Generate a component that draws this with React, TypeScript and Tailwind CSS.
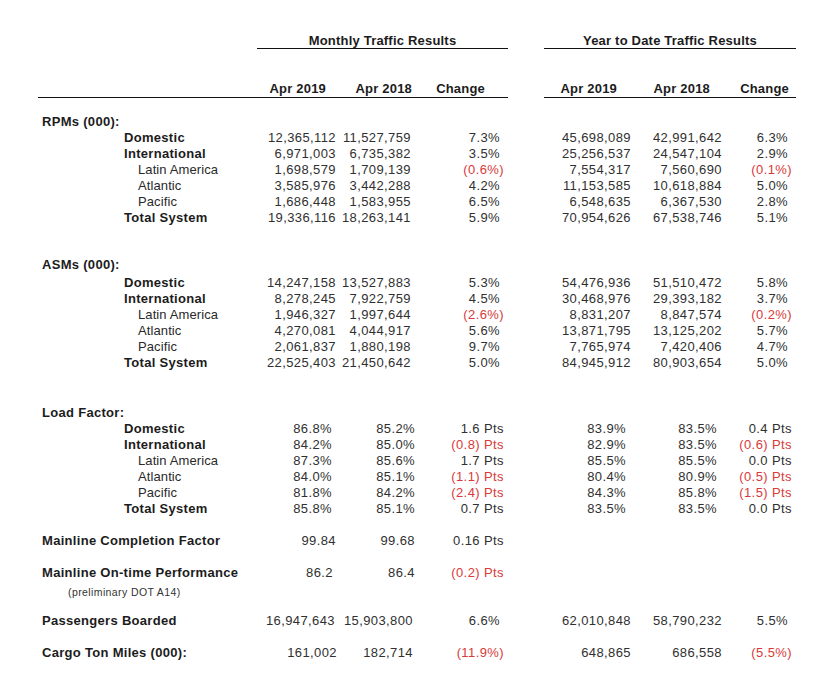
import React from 'react';

type Level = 'section' | 'main' | 'sub';

interface RowProps {
  label: string;
  level: Level;
  values?: (string | null)[];
  pads?: string[];
  className?: string;
}

const NUM_PADS = ['pr-[4px]', 'pr-[4px]', 'pr-[8px]', 'pr-[4px]', 'pr-[3px]', 'pr-[8px]'];
const LF_PADS = ['pr-[8px]', 'pr-0', 'pr-[4px]', 'pr-[9px]', 'pr-[8px]', 'pr-[4px]'];
const COL_WIDTHS = ['w-[83px]', 'w-[75px]', 'w-[93px]', 'w-[91px]', 'w-[90px]', 'w-[71px]'];

const labelClass: Record<Level, string> = {
  section: 'pl-[42px] font-bold tracking-[0.3px] text-[#1c1c1c]',
  main: 'pl-[124px] font-bold tracking-[0.3px] text-[#1c1c1c]',
  sub: 'pl-[138px] tracking-[0.1px] text-[#2a2a2a]',
};

const Row: React.FC<RowProps> = ({ label, level, values, pads = NUM_PADS, className = '' }) => {
  const cells = values ?? [];
  return (
    <div className={`flex h-[16px] items-center leading-[16px] ${className}`}>
      <div className={`w-[257px] shrink-0 whitespace-nowrap ${labelClass[level]}`}>{label}</div>
      {COL_WIDTHS.map((w, i) => {
        const v = cells[i];
        const neg = !!v && v.startsWith('(');
        // negatives in the change columns sit further right, like Excel's _) format
        let pad = pads[i];
        if (neg && (i === 2 || i === 5)) pad = 'pr-[4px]';
        return (
          <React.Fragment key={i}>
            {i === 3 && <div className="w-[36px] shrink-0" />}
            <div
              className={`${w} shrink-0 whitespace-nowrap text-right tracking-[0.4px] ${pad} ${
                neg ? 'text-[#d83a3a]' : 'text-[#303030]'
              }`}
            >
              {v ?? ''}
            </div>
          </React.Fragment>
        );
      })}
    </div>
  );
};

const rpms = [
  { label: 'Domestic', level: 'main' as Level, values: ['12,365,112', '11,527,759', '7.3%', '45,698,089', '42,991,642', '6.3%'] },
  { label: 'International', level: 'main' as Level, values: ['6,971,003', '6,735,382', '3.5%', '25,256,537', '24,547,104', '2.9%'] },
  { label: 'Latin America', level: 'sub' as Level, values: ['1,698,579', '1,709,139', '(0.6%)', '7,554,317', '7,560,690', '(0.1%)'] },
  { label: 'Atlantic', level: 'sub' as Level, values: ['3,585,976', '3,442,288', '4.2%', '11,153,585', '10,618,884', '5.0%'] },
  { label: 'Pacific', level: 'sub' as Level, values: ['1,686,448', '1,583,955', '6.5%', '6,548,635', '6,367,530', '2.8%'] },
  { label: 'Total System', level: 'main' as Level, values: ['19,336,116', '18,263,141', '5.9%', '70,954,626', '67,538,746', '5.1%'] },
];

const asms = [
  { label: 'Domestic', level: 'main' as Level, values: ['14,247,158', '13,527,883', '5.3%', '54,476,936', '51,510,472', '5.8%'] },
  { label: 'International', level: 'main' as Level, values: ['8,278,245', '7,922,759', '4.5%', '30,468,976', '29,393,182', '3.7%'] },
  { label: 'Latin America', level: 'sub' as Level, values: ['1,946,327', '1,997,644', '(2.6%)', '8,831,207', '8,847,574', '(0.2%)'] },
  { label: 'Atlantic', level: 'sub' as Level, values: ['4,270,081', '4,044,917', '5.6%', '13,871,795', '13,125,202', '5.7%'] },
  { label: 'Pacific', level: 'sub' as Level, values: ['2,061,837', '1,880,198', '9.7%', '7,765,974', '7,420,406', '4.7%'] },
  { label: 'Total System', level: 'main' as Level, values: ['22,525,403', '21,450,642', '5.0%', '84,945,912', '80,903,654', '5.0%'] },
];

const loadFactor = [
  { label: 'Domestic', level: 'main' as Level, values: ['86.8%', '85.2%', '1.6 Pts', '83.9%', '83.5%', '0.4 Pts'] },
  { label: 'International', level: 'main' as Level, values: ['84.2%', '85.0%', '(0.8) Pts', '82.9%', '83.5%', '(0.6) Pts'] },
  { label: 'Latin America', level: 'sub' as Level, values: ['87.3%', '85.6%', '1.7 Pts', '85.5%', '85.5%', '0.0 Pts'] },
  { label: 'Atlantic', level: 'sub' as Level, values: ['84.0%', '85.1%', '(1.1) Pts', '80.4%', '80.9%', '(0.5) Pts'] },
  { label: 'Pacific', level: 'sub' as Level, values: ['81.8%', '84.2%', '(2.4) Pts', '84.3%', '85.8%', '(1.5) Pts'] },
  { label: 'Total System', level: 'main' as Level, values: ['85.8%', '85.1%', '0.7 Pts', '83.5%', '83.5%', '0.0 Pts'] },
];

const App: React.FC = () => {
  return (
    <div
      className="w-[835px] h-[688px] overflow-hidden bg-white text-[13px] pt-[33px]"
      style={{ fontFamily: '"Liberation Sans", Arial, sans-serif' }}
    >
      {/* group titles */}
      <div className="flex h-[16px] leading-[15px] font-bold tracking-[0.2px] text-[#1c1c1c]">
        <div className="w-[257px] shrink-0" />
        <div className="w-[251px] shrink-0 text-center border-b-[1.5px] border-[#111] h-[16px]">Monthly Traffic Results</div>
        <div className="w-[36px] shrink-0" />
        <div className="w-[252px] shrink-0 text-center border-b-[1.5px] border-[#111] h-[16px]">Year to Date Traffic Results</div>
      </div>

      {/* column headings */}
      <div className="mt-[32px] flex h-[17px] leading-[16px] font-bold tracking-[0.2px] text-[#1c1c1c]">
        <div className="ml-[38px] flex w-[470px] shrink-0 border-b-[1.5px] border-[#111]">
          <div className="w-[219px] shrink-0" />
          <div className="w-[83px] shrink-0 text-right pr-[14px]">Apr 2019</div>
          <div className="w-[75px] shrink-0 text-right pr-[3px]">Apr 2018</div>
          <div className="w-[93px] shrink-0 text-right pr-[23px]">Change</div>
        </div>
        <div className="w-[36px] shrink-0" />
        <div className="flex w-[252px] shrink-0 border-b-[1.5px] border-[#111]">
          <div className="w-[91px] shrink-0 text-right pr-[18px]">Apr 2019</div>
          <div className="w-[90px] shrink-0 text-right pr-[15px]">Apr 2018</div>
          <div className="w-[71px] shrink-0 text-right pr-[7px]">Change</div>
        </div>
      </div>

      <Row className="mt-[16px]" label="RPMs (000):" level="section" />
      {rpms.map((r) => (
        <Row key={'rpm' + r.label} label={r.label} level={r.level} values={r.values} />
      ))}

      <Row className="mt-[31px]" label="ASMs (000):" level="section" />
      <div className="mt-[2px]">
        {asms.map((r) => (
          <Row key={'asm' + r.label} label={r.label} level={r.level} values={r.values} />
        ))}
      </div>

      <Row className="mt-[34px]" label="Load Factor:" level="section" />
      {loadFactor.map((r) => (
        <Row key={'lf' + r.label} label={r.label} level={r.level} values={r.values} pads={LF_PADS} />
      ))}

      <Row
        className="mt-[16px]"
        label="Mainline Completion Factor"
        level="section"
        values={['99.84', '99.68', '0.16 Pts', null, null, null]}
        pads={['pr-[4px]', 'pr-0', 'pr-[4px]', 'pr-0', 'pr-0', 'pr-0']}
      />
      <Row
        className="mt-[16px]"
        label="Mainline On-time Performance"
        level="section"
        values={['86.2', '86.4', '(0.2) Pts', null, null, null]}
        pads={['pr-[7px]', 'pr-0', 'pr-[4px]', 'pr-0', 'pr-0', 'pr-0']}
      />
      <div className="mt-[4px] h-[14px] pl-[68px] text-[10.5px] leading-[14px] tracking-[0.4px] text-[#333]">
        (preliminary DOT A14)
      </div>
      <Row
        className="mt-[14px]"
        label="Passengers Boarded"
        level="section"
        values={['16,947,643', '15,903,800', '6.6%', '62,010,848', '58,790,232', '5.5%']}
        pads={['pr-[5px]', 'pr-[2px]', 'pr-[8px]', 'pr-[4px]', 'pr-[3px]', 'pr-[8px]']}
      />
      <Row
        className="mt-[16px]"
        label="Cargo Ton Miles (000):"
        level="section"
        values={['161,002', '182,714', '(11.9%)', '648,865', '686,558', '(5.5%)']}
        pads={['pr-[3px]', 'pr-[2px]', 'pr-[4px]', 'pr-[4px]', 'pr-[3px]', 'pr-[4px]']}
      />
    </div>
  );
};

export default App;
